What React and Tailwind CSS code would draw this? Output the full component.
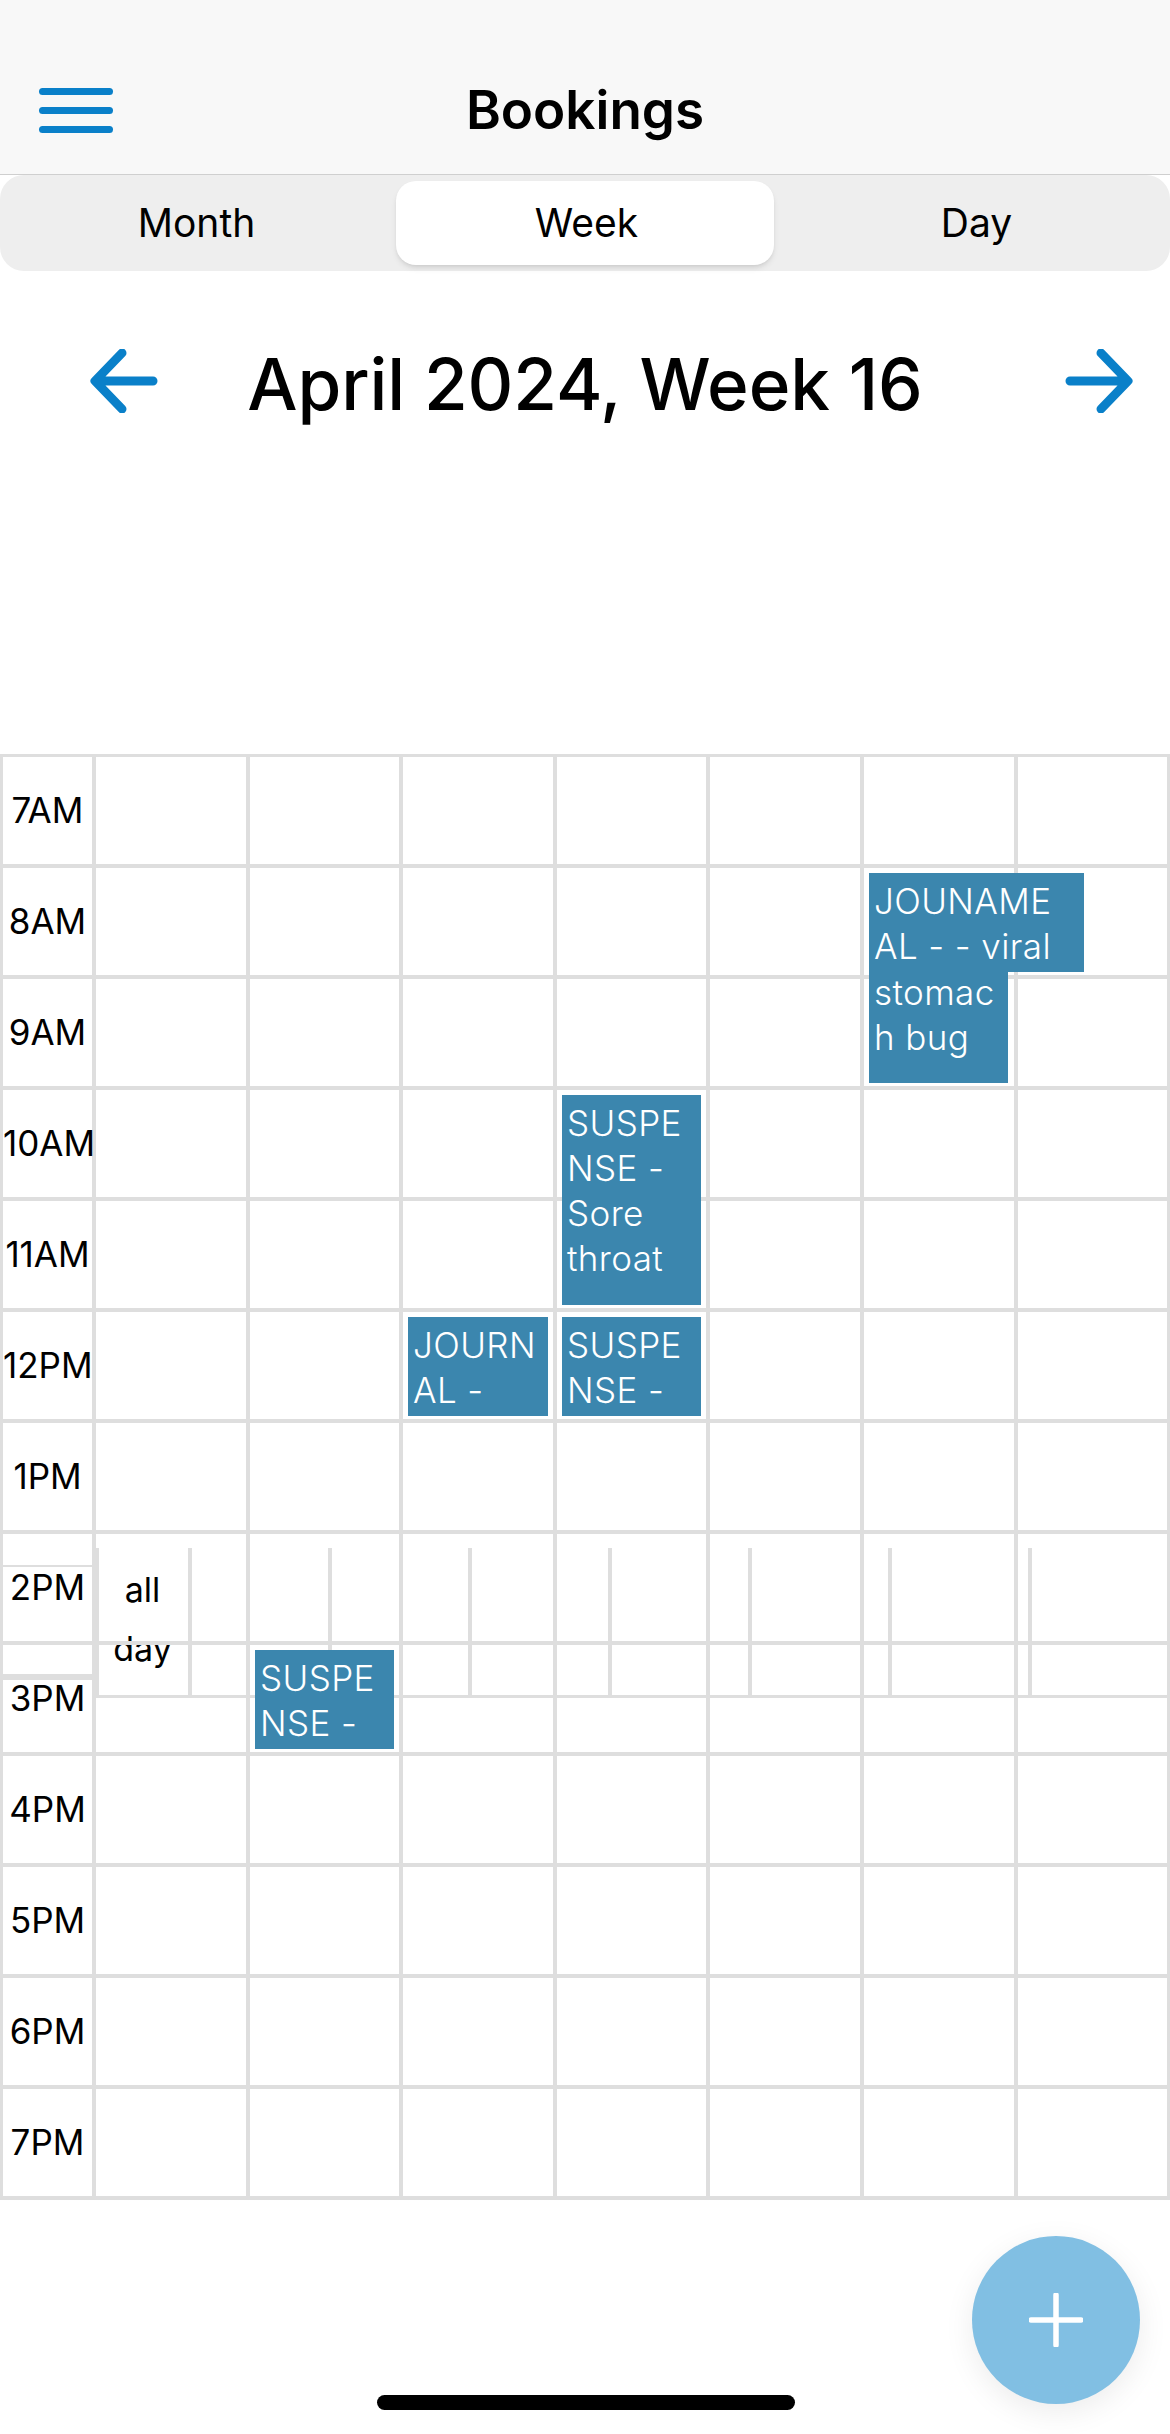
import React from 'react';

const hours = ['7AM', '8AM', '9AM', '10AM', '11AM', '12PM', '1PM', '2PM', '3PM', '4PM', '5PM', '6PM', '7PM'];
const days = [0, 1, 2, 3, 4, 5, 6];

function Arrow({ flip }) {
  return (
    <svg width="68" height="64" viewBox="0 0 68 64" fill="none" className={flip ? 'rotate-180 justify-self-end' : ''}>
      <path d="M63 32H6M32 4L5 32l27 28" stroke="#0a80c9" strokeWidth="9" strokeLinecap="round" strokeLinejoin="round" />
    </svg>
  );
}

function EventBlock({ className, children }) {
  return (
    <div className={`absolute z-20 bg-[#3b86ae] text-white text-[35px] font-light leading-[45px] pl-[5px] pt-[6px] tracking-[0.4px] whitespace-pre ${className}`}>
      {children}
    </div>
  );
}

export default function App() {
  return (
    <div className="relative h-[2434px] w-[1170px] overflow-hidden bg-white text-black font-['Inter',sans-serif]">
      {/* Top bar */}
      <div className="h-[175px] bg-[#f8f8f8] border-b border-[#cfcfcf] flex items-end pb-[41px] relative">
        <div className="ml-[39px] w-[74px] flex flex-col gap-[12px]">
          <div className="h-[7px] rounded-full bg-[#0a80c9]" />
          <div className="h-[7px] rounded-full bg-[#0a80c9]" />
          <div className="h-[7px] rounded-full bg-[#0a80c9]" />
        </div>
        <div className="absolute left-0 right-0 top-[80px] text-center text-[53px] leading-[60px] font-semibold">Bookings</div>
      </div>

      {/* Month / Week / Day */}
      <div className="h-[96px] bg-[#eeeeee] rounded-[24px] grid grid-cols-3 items-center text-[39px]">
        <div className="text-center pl-[3px]">Month</div>
        <div className="h-[84px] ml-[6px] mr-[6px] pl-[3px] bg-white rounded-[20px] shadow-md flex items-center justify-center">Week</div>
        <div className="text-center pl-[3px]">Day</div>
      </div>

      {/* Week header */}
      <div className="h-[220px] grid grid-cols-[1fr_auto_1fr] items-center pl-[90px] pr-[37px]">
        <Arrow />
        <div className="mt-[6px] -ml-[53px] text-[71px] leading-[90px] font-[450] tracking-[-0.1px]">April 2024, Week 16</div>
        <Arrow flip />
      </div>

      {/* Calendar */}
      <div className="relative mt-[263px] w-[1170px]">
        <div className="absolute z-0 left-[96px] right-0 top-[794px] h-[150px] border-b-[3px] border-[#dedede] flex">
          <div className="w-[96px] shrink-0 border-l-[3px] border-r-[4px] border-[#dedede] text-center text-[34px] leading-[59px] pt-[12px] pr-[2px]">
            all<br />day
          </div>
          {days.map((d) => (
            <div key={d} className="w-[140px] shrink-0 border-r-[4px] border-[#dedede]" />
          ))}
        </div>
        <div className="absolute z-20 left-[3px] w-[89px] top-[811px] h-[2px] bg-[#dedede]" />
        <div className="absolute z-20 left-[3px] w-[89px] top-[920px] h-[6px] bg-[#dedede]" />

        <div className="relative z-10 border-t-[3px] border-l-[3px] border-[#dedede] grid grid-cols-[93px_repeat(7,153.6px)]">
          {hours.map((h) => (
            <React.Fragment key={h}>
              <div className="h-[111px] border-r-[4px] border-b-[4px] border-[#dedede] text-center text-[35px] leading-[107px] whitespace-nowrap">{h}</div>
              {days.map((d) => (
                <div key={d} className="h-[111px] border-r-[4px] border-b-[4px] border-[#dedede]" />
              ))}
            </React.Fragment>
          ))}
        </div>

        <EventBlock className="left-[869px] top-[119px] w-[215px] h-[99px]">{'JOUNAME\nAL - - viral'}</EventBlock>
        <EventBlock className="left-[869px] top-[218px] w-[139px] h-[111px] !pt-0">
          <div className="-mt-[2px]">{'stomac\nh bug'}</div>
        </EventBlock>
        <EventBlock className="left-[562px] top-[341px] w-[139px] h-[210px]">{'SUSPE\nNSE -\nSore\nthroat'}</EventBlock>
        <EventBlock className="left-[408px] top-[563px] w-[140px] h-[99px]">{'JOURN\nAL -'}</EventBlock>
        <EventBlock className="left-[562px] top-[563px] w-[139px] h-[99px]">{'SUSPE\nNSE -'}</EventBlock>
        <EventBlock className="left-[255px] top-[896px] w-[139px] h-[99px]">{'SUSPE\nNSE -'}</EventBlock>
      </div>

      {/* Add button */}
      <div className="absolute left-[972px] top-[2236px] w-[168px] h-[168px] rounded-full bg-[#81bfe3] shadow-[0_8px_30px_rgba(0,0,0,0.08)] flex items-center justify-center z-30">
        <svg width="54" height="54" viewBox="0 0 54 54" fill="none">
          <path d="M27 2v50M2 27h50" stroke="#fff" strokeWidth="5.5" strokeLinecap="round" />
        </svg>
      </div>

      {/* Home indicator */}
      <div className="absolute left-[377px] top-[2395px] w-[418px] h-[15px] rounded-full bg-black z-30" />
    </div>
  );
}
